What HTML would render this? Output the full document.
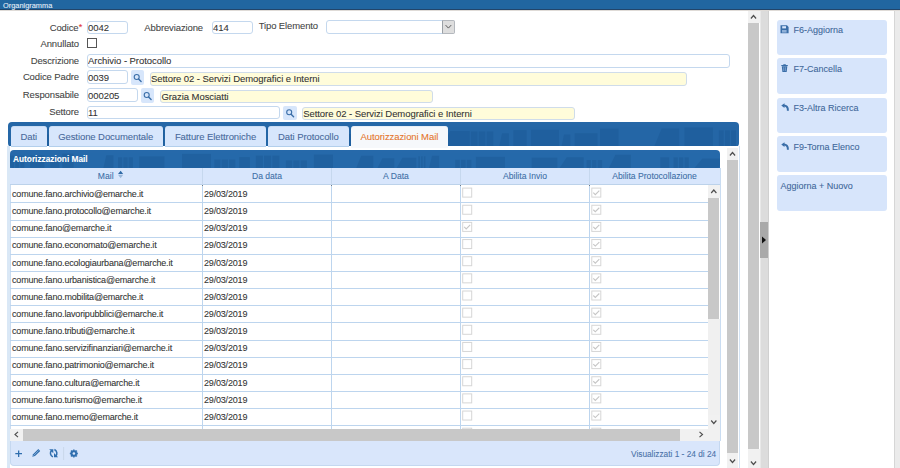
<!DOCTYPE html>
<html><head><meta charset="utf-8">
<style>
*{box-sizing:border-box;margin:0;padding:0}
html,body{width:900px;height:468px;overflow:hidden;background:#fff;font-family:"Liberation Sans",sans-serif;color:#333;-webkit-text-stroke:0.08px}
.a{position:absolute}
.lbl{font-size:9.5px;letter-spacing:-0.12px;color:#444;text-align:right;white-space:nowrap;line-height:14px}
.inp{border:1px solid #c4d8ee;border-radius:3px;background:#fff;font-size:9.5px;letter-spacing:-0.06px;line-height:12px;color:#333;padding-left:0;white-space:nowrap;overflow:hidden}
.yel{border:1px solid #cfdcea;border-radius:3px;background:#fffcda;font-size:9.5px;letter-spacing:-0.06px;line-height:12.5px;color:#333;padding-left:0;white-space:nowrap;overflow:hidden}
.sbtn{background:#d7e6fb;border-radius:2px}
.tab{top:126px;height:21px;background:#d7e6fc;border-top:1px solid #c9dcf3;border-bottom:1px solid #b3cfec;border-radius:3px 3px 0 0;color:#48699b;font-size:9.5px;letter-spacing:-0.08px;line-height:20.6px;text-align:center;white-space:nowrap}
.tab.act{background:#f6f8fb;color:#e5742a;height:22px;border-bottom:none;border-top-color:#e8eef6}
.gl{background:#bdd5ee}
.rt{font-size:9px;letter-spacing:-0.18px;color:#333;line-height:17px;white-space:nowrap}
.rbtn{left:776.5px;width:110.5px;height:35.5px;background:#d7e5fb;border-radius:3px;color:#3f679a;font-size:9px;line-height:12px;padding:4.4px 0 0 17px;white-space:nowrap}
.sb{background:#c8c8c8}
.arr{background:#f1f1f1}
.hd{font-size:8.6px;color:#3d6ea6;text-align:center;line-height:17px;white-space:nowrap}
</style></head><body>
<div class="a" style="left:0;top:0;width:900px;height:10px;background:#2166a0;border-bottom:1px solid #22456a"></div>
<div class="a" style="left:3px;top:0.8px;font-size:7.4px;line-height:10px;color:#e8f0f8;white-space:nowrap">Organigramma</div>
<div class="a" style="left:0;top:10px;width:900px;height:1px;background:#dfdbd7"></div>

<div class="a lbl" style="left:30px;top:21px;width:48.5px">Codice</div><div class="a" style="left:78.8px;top:22px;font-size:9px;line-height:10px;color:#e03030">*</div>
<div class="a inp" style="left:87px;top:21px;width:41px;height:13px">0042</div>
<div class="a lbl" style="left:140px;top:21px;width:63px">Abbreviazione</div>
<div class="a inp" style="left:212px;top:21px;width:41px;height:13px">414</div>
<div class="a lbl" style="left:250px;top:18.5px;width:68px">Tipo Elemento</div>
<div class="a inp" style="left:326px;top:19.5px;width:129px;height:14.5px"></div>
<div class="a" style="left:442px;top:20px;width:12.5px;height:13.5px;background:#dedede;border:1px solid #b4b8bd;border-left-color:#9aa0a6;border-radius:0 2px 2px 0"></div>
<div class="a lbl" style="left:20px;top:37px;width:59px">Annullato</div>
<div class="a" style="left:87px;top:38px;width:10px;height:10px;border:1px solid #555;background:#fff"></div>

<div class="a lbl" style="left:20px;top:54px;width:59px">Descrizione</div>
<div class="a inp" style="left:87px;top:54px;width:643px;height:14px">Archivio - Protocollo</div>

<div class="a lbl" style="left:10px;top:70px;width:69px">Codice Padre</div>
<div class="a inp" style="left:87px;top:70.4px;width:41.2px;height:13.6px;padding-top:0.6px">0039</div>
<div class="a sbtn" style="left:131px;top:70.3px;width:13px;height:14.7px"></div>
<div class="a yel" style="left:150px;top:72.3px;width:536.5px;height:13.3px">Settore 02 - Servizi Demografici e Interni</div>

<div class="a lbl" style="left:10px;top:88px;width:69px">Responsabile</div>
<div class="a inp" style="left:87px;top:88.2px;width:51.4px;height:13.4px;padding-top:0.8px">000205</div>
<div class="a sbtn" style="left:141px;top:88.2px;width:13.4px;height:14.7px"></div>
<div class="a yel" style="left:160.4px;top:90px;width:272.5px;height:13px">Grazia Mosciatti</div>

<div class="a lbl" style="left:10px;top:105px;width:69px">Settore</div>
<div class="a inp" style="left:87px;top:105.6px;width:193px;height:13px">11</div>
<div class="a sbtn" style="left:283.3px;top:105.7px;width:13.4px;height:14.3px"></div>
<div class="a yel" style="left:302.2px;top:107.3px;width:273.3px;height:13px">Settore 02 - Servizi Demografici e Interni</div>

<div class="a" style="left:8px;top:121.8px;width:730.5px;height:25.4px;background:#2567a7;border-radius:4px"></div>
<svg class="a" style="left:0;top:0" width="900" height="468" viewBox="0 0 900 468"><defs><clipPath id="c1"><rect x="8" y="122" width="730.5" height="25" rx="4"/></clipPath></defs><g clip-path="url(#c1)" fill="#1a5690" opacity="0.38"><rect x="41.3" y="134.5" width="3.9" height="12.5"/><rect x="46.4" y="134.5" width="3.9" height="12.5"/><rect x="51.5" y="134.5" width="3.9" height="12.5"/><rect x="62.6" y="133.4" width="28.8" height="13.6"/><rect x="93.6" y="130.6" width="29.4" height="16.4"/><rect x="128.6" y="129.9" width="19.1" height="17.1"/><rect x="149.3" y="129.9" width="6.9" height="17.1"/><rect x="157.4" y="129.9" width="6.9" height="17.1"/><rect x="165.6" y="129.9" width="6.9" height="17.1"/><rect x="176.1" y="134.2" width="1.6" height="12.8"/><rect x="178.8" y="134.2" width="1.6" height="12.8"/><rect x="181.6" y="134.2" width="1.6" height="12.8"/><polygon points="188.2,147 192.2,131.4 201.8,131.4 201.8,147"/><polygon points="207.5,147 210.6,133.6 217.9,133.6 217.9,147"/><rect x="220.0" y="132.0" width="25.1" height="15.0"/><rect x="268.3" y="135.5" width="5.9" height="11.5"/><rect x="275.4" y="135.5" width="5.9" height="11.5"/><rect x="282.5" y="135.5" width="5.9" height="11.5"/><polygon points="295.3,147 298.0,134.1 304.3,134.1 304.3,147"/><polygon points="307.2,147 314.0,132.0 330.0,132.0 330.0,147"/><rect x="332.2" y="134.0" width="30.0" height="13.0"/><polygon points="366.1,147 370.4,130.8 380.3,130.8 380.3,147"/><polygon points="383.2,147 390.8,132.6 408.4,132.6 408.4,147"/><rect x="411.4" y="134.4" width="24.7" height="12.6"/><polygon points="441.8,147 450.2,131.0 469.8,131.0 469.8,147"/><rect x="470.8" y="131.4" width="6.7" height="15.6"/><rect x="478.7" y="131.4" width="6.7" height="15.6"/><rect x="486.6" y="131.4" width="6.7" height="15.6"/><polygon points="499.1,147 502.0,133.2 508.9,133.2 508.9,147"/><rect x="513.3" y="130.1" width="13.4" height="16.9"/><rect x="530.9" y="129.8" width="28.1" height="17.2"/><polygon points="561.3,147 564.0,134.4 570.4,134.4 570.4,147"/><rect x="574.6" y="133.2" width="22.9" height="13.8"/><rect x="600.0" y="128.6" width="18.6" height="18.4"/><polygon points="654.0,147 661.6,128.6 679.2,128.6 679.2,147"/><rect x="684.4" y="127.5" width="28.5" height="19.5"/><rect x="718.8" y="130.3" width="4.9" height="16.7"/><rect x="725.0" y="130.3" width="4.9" height="16.7"/><rect x="731.1" y="130.3" width="4.9" height="16.7"/></g></svg>
<div class="a" style="left:7px;top:146px;width:733px;height:330px;border-left:3px solid #dae8f6;border-right:1.5px solid #d3e3f4;background:#fff"></div>
<div class="a" style="left:10px;top:168px;width:1px;height:273px;background:#c9dcf1"></div>
<div class="a tab" style="left:10.8px;width:36px">Dati</div>
<div class="a tab" style="left:48.6px;width:114.2px">Gestione Documentale</div>
<div class="a tab" style="left:164.9px;width:101.3px">Fatture Elettroniche</div>
<div class="a tab" style="left:267.8px;width:81.1px">Dati Protocollo</div>
<div class="a tab act" style="left:351px;width:96.8px">Autorizzazioni Mail</div>

<div class="a" style="left:10px;top:149.8px;width:710px;height:18.4px;background:#2669aa;border-radius:4px 4px 0 0"></div>
<svg class="a" style="left:0;top:0" width="900" height="468" viewBox="0 0 900 468"><defs><clipPath id="c2"><rect x="10" y="149.8" width="710" height="18.4" rx="4"/></clipPath></defs><g clip-path="url(#c2)" fill="#1a5690" opacity="0.38"><rect x="10.0" y="155.7" width="4.0" height="12.5"/><rect x="15.2" y="155.7" width="4.0" height="12.5"/><rect x="20.3" y="155.7" width="4.0" height="12.5"/><rect x="30.1" y="155.4" width="14.3" height="12.8"/><rect x="50.2" y="157.8" width="9.2" height="10.4"/><rect x="62.3" y="153.7" width="11.3" height="14.5"/><polygon points="103.3,168.20000000000002 106.3,155.3 113.5,155.3 113.5,168.20000000000002"/><rect x="118.0" y="157.3" width="4.2" height="10.9"/><rect x="123.4" y="157.3" width="4.2" height="10.9"/><rect x="128.7" y="157.3" width="4.2" height="10.9"/><rect x="139.2" y="156.4" width="25.3" height="11.8"/><rect x="182.0" y="153.9" width="29.0" height="14.3"/><rect x="214.3" y="159.5" width="6.2" height="8.7"/><rect x="221.7" y="159.5" width="6.2" height="8.7"/><rect x="229.1" y="159.5" width="6.2" height="8.7"/><rect x="239.2" y="157.1" width="10.7" height="11.1"/><rect x="255.8" y="155.6" width="7.1" height="12.6"/><rect x="264.0" y="155.6" width="7.1" height="12.6"/><rect x="272.3" y="155.6" width="7.1" height="12.6"/><rect x="285.9" y="160.4" width="6.2" height="7.8"/><rect x="293.3" y="160.4" width="6.2" height="7.8"/><rect x="300.7" y="160.4" width="6.2" height="7.8"/><rect x="313.9" y="154.5" width="19.1" height="13.7"/><polygon points="356.1,168.20000000000002 361.2,155.7 373.3,155.7 373.3,168.20000000000002"/><polygon points="377.3,168.20000000000002 382.4,158.3 394.3,158.3 394.3,168.20000000000002"/><polygon points="396.5,168.20000000000002 402.4,157.7 416.3,157.7 416.3,168.20000000000002"/><rect x="418.3" y="156.3" width="1.6" height="11.9"/><rect x="421.1" y="156.3" width="1.6" height="11.9"/><rect x="423.9" y="156.3" width="1.6" height="11.9"/><polygon points="429.0,168.20000000000002 432.0,155.8 439.1,155.8 439.1,168.20000000000002"/><rect x="455.2" y="159.8" width="4.6" height="8.4"/><rect x="461.0" y="159.8" width="4.6" height="8.4"/><rect x="466.8" y="159.8" width="4.6" height="8.4"/><rect x="475.9" y="156.8" width="29.1" height="11.4"/><rect x="531.7" y="157.7" width="25.6" height="10.5"/><polygon points="559.4,168.20000000000002 566.7,157.3 583.7,157.3 583.7,168.20000000000002"/><rect x="586.5" y="160.0" width="4.4" height="8.2"/><rect x="592.1" y="160.0" width="4.4" height="8.2"/><rect x="597.7" y="160.0" width="4.4" height="8.2"/><polygon points="608.8,168.20000000000002 615.4,154.8 630.8,154.8 630.8,168.20000000000002"/><rect x="660.3" y="157.3" width="8.9" height="10.9"/><rect x="673.5" y="157.4" width="4.3" height="10.8"/><rect x="679.0" y="157.4" width="4.3" height="10.8"/><rect x="684.5" y="157.4" width="4.3" height="10.8"/><polygon points="694.2,168.20000000000002 702.4,158.4 721.5,158.4 721.5,168.20000000000002"/></g></svg>
<div class="a" style="left:10px;top:150px;width:710px;height:18.4px;color:#fff;font-weight:bold;font-size:8.3px;line-height:18px;padding-left:3px">Autorizzazioni Mail</div>
<div class="a" style="left:10px;top:168.2px;width:710px;height:17px;background:#d8e6fc;border-bottom:1px solid #bcd2ea"></div>
<div class="a hd" style="left:97.8px;top:168px;text-align:left">Mail</div>
<div class="a hd" style="left:202px;top:168px;width:130px">Da data</div>
<div class="a hd" style="left:331px;top:168px;width:130px">A Data</div>
<div class="a hd" style="left:460px;top:168px;width:130px">Abilita Invio</div>
<div class="a hd" style="left:589px;top:168px;width:131px">Abilita Protocollazione</div>

<div class="a" style="left:0;top:0;width:708px;height:428.7px;overflow:hidden"><div class="a rt" style="left:12px;top:185.90px">comune.fano.archivio@emarche.it</div><div class="a rt" style="left:204px;top:185.90px">29/03/2019</div><div class="a gl" style="left:10px;top:202px;width:698px;height:1px"></div><div class="a rt" style="left:12px;top:203.05px">comune.fano.protocollo@emarche.it</div><div class="a rt" style="left:204px;top:203.05px">29/03/2019</div><div class="a gl" style="left:10px;top:220px;width:698px;height:1px"></div><div class="a rt" style="left:12px;top:220.20px">comune.fano@emarche.it</div><div class="a rt" style="left:204px;top:220.20px">29/03/2019</div><div class="a gl" style="left:10px;top:237px;width:698px;height:1px"></div><div class="a rt" style="left:12px;top:237.35px">comune.fano.economato@emarche.it</div><div class="a rt" style="left:204px;top:237.35px">29/03/2019</div><div class="a gl" style="left:10px;top:254px;width:698px;height:1px"></div><div class="a rt" style="left:12px;top:254.50px">comune.fano.ecologiaurbana@emarche.it</div><div class="a rt" style="left:204px;top:254.50px">29/03/2019</div><div class="a gl" style="left:10px;top:271px;width:698px;height:1px"></div><div class="a rt" style="left:12px;top:271.65px">comune.fano.urbanistica@emarche.it</div><div class="a rt" style="left:204px;top:271.65px">29/03/2019</div><div class="a gl" style="left:10px;top:288px;width:698px;height:1px"></div><div class="a rt" style="left:12px;top:288.80px">comune.fano.mobilita@emarche.it</div><div class="a rt" style="left:204px;top:288.80px">29/03/2019</div><div class="a gl" style="left:10px;top:305px;width:698px;height:1px"></div><div class="a rt" style="left:12px;top:305.95px">comune.fano.lavoripubblici@emarche.it</div><div class="a rt" style="left:204px;top:305.95px">29/03/2019</div><div class="a gl" style="left:10px;top:322px;width:698px;height:1px"></div><div class="a rt" style="left:12px;top:323.10px">comune.fano.tributi@emarche.it</div><div class="a rt" style="left:204px;top:323.10px">29/03/2019</div><div class="a gl" style="left:10px;top:340px;width:698px;height:1px"></div><div class="a rt" style="left:12px;top:340.25px">comune.fano.servizifinanziari@emarche.it</div><div class="a rt" style="left:204px;top:340.25px">29/03/2019</div><div class="a gl" style="left:10px;top:357px;width:698px;height:1px"></div><div class="a rt" style="left:12px;top:357.40px">comune.fano.patrimonio@emarche.it</div><div class="a rt" style="left:204px;top:357.40px">29/03/2019</div><div class="a gl" style="left:10px;top:374px;width:698px;height:1px"></div><div class="a rt" style="left:12px;top:374.55px">comune.fano.cultura@emarche.it</div><div class="a rt" style="left:204px;top:374.55px">29/03/2019</div><div class="a gl" style="left:10px;top:391px;width:698px;height:1px"></div><div class="a rt" style="left:12px;top:391.70px">comune.fano.turismo@emarche.it</div><div class="a rt" style="left:204px;top:391.70px">29/03/2019</div><div class="a gl" style="left:10px;top:408px;width:698px;height:1px"></div><div class="a rt" style="left:12px;top:408.85px">comune.fano.memo@emarche.it</div><div class="a rt" style="left:204px;top:408.85px">29/03/2019</div><div class="a gl" style="left:10px;top:425px;width:698px;height:1px"></div><div class="a rt" style="left:12px;top:426.00px">comune.fano.x@emarche.it</div><div class="a rt" style="left:204px;top:426.00px">29/03/2019</div><div class="a gl" style="left:10px;top:443px;width:698px;height:1px"></div><div class="a gl" style="left:202px;top:185px;width:1px;height:244px"></div><div class="a" style="left:202px;top:168px;width:1px;height:17px;background:#c6d8ee"></div><div class="a" style="left:202px;top:185px;width:1px;height:1px;background:#6d7a88"></div><div class="a gl" style="left:331px;top:185px;width:1px;height:244px"></div><div class="a" style="left:331px;top:168px;width:1px;height:17px;background:#c6d8ee"></div><div class="a" style="left:331px;top:185px;width:1px;height:1px;background:#6d7a88"></div><div class="a gl" style="left:460px;top:185px;width:1px;height:244px"></div><div class="a" style="left:460px;top:168px;width:1px;height:17px;background:#c6d8ee"></div><div class="a" style="left:460px;top:185px;width:1px;height:1px;background:#6d7a88"></div><div class="a gl" style="left:589px;top:185px;width:1px;height:244px"></div><div class="a" style="left:589px;top:168px;width:1px;height:17px;background:#c6d8ee"></div><div class="a" style="left:589px;top:185px;width:1px;height:1px;background:#6d7a88"></div><svg class="a" style="left:0;top:0" width="900" height="468" viewBox="0 0 900 468"><rect x="462.7" y="188.10" width="9" height="9" fill="#fff" stroke="#d6d6d6" stroke-width="1"/><rect x="591.8" y="188.10" width="9" height="9" fill="#fff" stroke="#d6d6d6" stroke-width="1"/><path d="M593.3,192.60000000000002 L595.3,194.60000000000002 L599.3,190.60000000000002" fill="none" stroke="#c6c6c6" stroke-width="1.1"/><rect x="462.7" y="205.25" width="9" height="9" fill="#fff" stroke="#d6d6d6" stroke-width="1"/><rect x="591.8" y="205.25" width="9" height="9" fill="#fff" stroke="#d6d6d6" stroke-width="1"/><path d="M593.3,209.75000000000003 L595.3,211.75000000000003 L599.3,207.75000000000003" fill="none" stroke="#c6c6c6" stroke-width="1.1"/><rect x="462.7" y="222.40" width="9" height="9" fill="#fff" stroke="#d6d6d6" stroke-width="1"/><path d="M464.2,226.90000000000003 L466.2,228.90000000000003 L470.2,224.90000000000003" fill="none" stroke="#c6c6c6" stroke-width="1.1"/><rect x="591.8" y="222.40" width="9" height="9" fill="#fff" stroke="#d6d6d6" stroke-width="1"/><path d="M593.3,226.90000000000003 L595.3,228.90000000000003 L599.3,224.90000000000003" fill="none" stroke="#c6c6c6" stroke-width="1.1"/><rect x="462.7" y="239.55" width="9" height="9" fill="#fff" stroke="#d6d6d6" stroke-width="1"/><rect x="591.8" y="239.55" width="9" height="9" fill="#fff" stroke="#d6d6d6" stroke-width="1"/><path d="M593.3,244.05 L595.3,246.05 L599.3,242.05" fill="none" stroke="#c6c6c6" stroke-width="1.1"/><rect x="462.7" y="256.70" width="9" height="9" fill="#fff" stroke="#d6d6d6" stroke-width="1"/><rect x="591.8" y="256.70" width="9" height="9" fill="#fff" stroke="#d6d6d6" stroke-width="1"/><path d="M593.3,261.2 L595.3,263.2 L599.3,259.2" fill="none" stroke="#c6c6c6" stroke-width="1.1"/><rect x="462.7" y="273.85" width="9" height="9" fill="#fff" stroke="#d6d6d6" stroke-width="1"/><rect x="591.8" y="273.85" width="9" height="9" fill="#fff" stroke="#d6d6d6" stroke-width="1"/><path d="M593.3,278.35 L595.3,280.35 L599.3,276.35" fill="none" stroke="#c6c6c6" stroke-width="1.1"/><rect x="462.7" y="291.00" width="9" height="9" fill="#fff" stroke="#d6d6d6" stroke-width="1"/><rect x="591.8" y="291.00" width="9" height="9" fill="#fff" stroke="#d6d6d6" stroke-width="1"/><path d="M593.3,295.5 L595.3,297.5 L599.3,293.5" fill="none" stroke="#c6c6c6" stroke-width="1.1"/><rect x="462.7" y="308.15" width="9" height="9" fill="#fff" stroke="#d6d6d6" stroke-width="1"/><rect x="591.8" y="308.15" width="9" height="9" fill="#fff" stroke="#d6d6d6" stroke-width="1"/><path d="M593.3,312.65000000000003 L595.3,314.65000000000003 L599.3,310.65000000000003" fill="none" stroke="#c6c6c6" stroke-width="1.1"/><rect x="462.7" y="325.30" width="9" height="9" fill="#fff" stroke="#d6d6d6" stroke-width="1"/><rect x="591.8" y="325.30" width="9" height="9" fill="#fff" stroke="#d6d6d6" stroke-width="1"/><path d="M593.3,329.8 L595.3,331.8 L599.3,327.8" fill="none" stroke="#c6c6c6" stroke-width="1.1"/><rect x="462.7" y="342.45" width="9" height="9" fill="#fff" stroke="#d6d6d6" stroke-width="1"/><rect x="591.8" y="342.45" width="9" height="9" fill="#fff" stroke="#d6d6d6" stroke-width="1"/><path d="M593.3,346.95 L595.3,348.95 L599.3,344.95" fill="none" stroke="#c6c6c6" stroke-width="1.1"/><rect x="462.7" y="359.60" width="9" height="9" fill="#fff" stroke="#d6d6d6" stroke-width="1"/><rect x="591.8" y="359.60" width="9" height="9" fill="#fff" stroke="#d6d6d6" stroke-width="1"/><path d="M593.3,364.1 L595.3,366.1 L599.3,362.1" fill="none" stroke="#c6c6c6" stroke-width="1.1"/><rect x="462.7" y="376.75" width="9" height="9" fill="#fff" stroke="#d6d6d6" stroke-width="1"/><rect x="591.8" y="376.75" width="9" height="9" fill="#fff" stroke="#d6d6d6" stroke-width="1"/><path d="M593.3,381.25 L595.3,383.25 L599.3,379.25" fill="none" stroke="#c6c6c6" stroke-width="1.1"/><rect x="462.7" y="393.90" width="9" height="9" fill="#fff" stroke="#d6d6d6" stroke-width="1"/><rect x="591.8" y="393.90" width="9" height="9" fill="#fff" stroke="#d6d6d6" stroke-width="1"/><path d="M593.3,398.40000000000003 L595.3,400.40000000000003 L599.3,396.40000000000003" fill="none" stroke="#c6c6c6" stroke-width="1.1"/><rect x="462.7" y="411.05" width="9" height="9" fill="#fff" stroke="#d6d6d6" stroke-width="1"/><rect x="591.8" y="411.05" width="9" height="9" fill="#fff" stroke="#d6d6d6" stroke-width="1"/><path d="M593.3,415.55 L595.3,417.55 L599.3,413.55" fill="none" stroke="#c6c6c6" stroke-width="1.1"/><rect x="462.7" y="428.20" width="9" height="9" fill="#fff" stroke="#d6d6d6" stroke-width="1"/><rect x="591.8" y="428.20" width="9" height="9" fill="#fff" stroke="#d6d6d6" stroke-width="1"/><path d="M593.3,432.7 L595.3,434.7 L599.3,430.7" fill="none" stroke="#c6c6c6" stroke-width="1.1"/></svg></div>

<div class="a" style="left:719.5px;top:168px;width:1px;height:273px;background:#c9dcf1"></div>
<div class="a arr" style="left:708px;top:185px;width:11.5px;height:13px"></div>
<div class="a sb" style="left:708px;top:198px;width:11px;height:120.7px"></div>
<div class="a" style="left:708px;top:318.7px;width:11.5px;height:96.3px;background:#f0f0f0"></div>
<div class="a arr" style="left:708px;top:415px;width:12px;height:14px"></div>
<div class="a arr" style="left:10px;top:428.7px;width:13px;height:12px"></div>
<div class="a sb" style="left:22.8px;top:428.7px;width:657.2px;height:12px"></div>
<div class="a arr" style="left:680px;top:428.7px;width:39.5px;height:12px"></div>
<div class="a" style="left:10px;top:440.5px;width:710px;height:25px;background:#d9e6fb;border-radius:0 0 4px 4px;border:1px solid #c5d8f0;border-top:none"></div>
<div class="a" style="left:631px;top:447.5px;font-size:8.3px;color:#4a72a8;line-height:12px;white-space:nowrap">Visualizzati 1 - 24 di 24</div>

<div class="a arr" style="left:727px;top:148.2px;width:11.2px;height:12px"></div>
<div class="a sb" style="left:727px;top:160.2px;width:11.2px;height:292.5px"></div>
<div class="a arr" style="left:727px;top:452.7px;width:11.2px;height:15.3px"></div>

<div class="a arr" style="left:748px;top:11.3px;width:11.5px;height:11.5px"></div>
<div class="a sb" style="left:748px;top:22.8px;width:11px;height:426px"></div>
<div class="a arr" style="left:748px;top:448.7px;width:11.5px;height:19.3px"></div>
<div class="a" style="left:759.5px;top:11px;width:9.1px;height:457px;background:#dcdcdc;border-left:1px solid #e8e8e8"></div>
<div class="a" style="left:760.2px;top:221.8px;width:8.4px;height:36.2px;background:#a9a9a9"></div>

<div class="a" style="left:768px;top:11px;width:1px;height:457px;background:#d0d0d0"></div>
<div class="a" style="left:894px;top:11px;width:6px;height:457px;background:#ebebeb;border-left:1px solid #d6d6d6"></div>
<div class="a rbtn" style="top:19.6px">F6-Aggiorna</div>
<div class="a rbtn" style="top:58.4px">F7-Cancella</div>
<div class="a rbtn" style="top:97.5px">F3-Altra Ricerca</div>
<div class="a rbtn" style="top:136.4px">F9-Torna Elenco</div>
<div class="a rbtn" style="top:175.3px;padding-left:4px">Aggiorna + Nuovo</div>
<svg class="a" style="left:0;top:0" width="900" height="468" viewBox="0 0 900 468"><path d="M750.9,18.5 L753.5,15.5 L756.1,18.5" fill="none" stroke="#4d4d4d" stroke-width="1.15"/><path d="M750.9,461.5 L753.5,464.5 L756.1,461.5" fill="none" stroke="#4d4d4d" stroke-width="1.15"/><path d="M729.9,155.5 L732.5,152.5 L735.1,155.5" fill="none" stroke="#4d4d4d" stroke-width="1.15"/><path d="M729.9,459.5 L732.5,462.5 L735.1,459.5" fill="none" stroke="#4d4d4d" stroke-width="1.15"/><path d="M711.1999999999999,193.0 L713.8,190.0 L716.4,193.0" fill="none" stroke="#4d4d4d" stroke-width="1.15"/><path d="M711.1999999999999,420.5 L713.8,423.5 L716.4,420.5" fill="none" stroke="#4d4d4d" stroke-width="1.15"/><path d="M18.0,431.9 L15.0,434.5 L18.0,437.1" fill="none" stroke="#4d4d4d" stroke-width="1.15"/><path d="M699.5,431.9 L702.5,434.5 L699.5,437.1" fill="none" stroke="#4d4d4d" stroke-width="1.15"/><path d="M445.59999999999997,25.1 L448.4,28.1 L451.2,25.1" fill="none" stroke="#5a5a5a" stroke-width="1.0"/><circle cx="136.7" cy="77" r="2.5" fill="none" stroke="#3a6ea8" stroke-width="1.1"/><path d="M138.6,78.9 L141.1,81.4" stroke="#3a6ea8" stroke-width="1.4" stroke-linecap="round"/><circle cx="146.7" cy="95" r="2.5" fill="none" stroke="#3a6ea8" stroke-width="1.1"/><path d="M148.6,96.9 L151.1,99.4" stroke="#3a6ea8" stroke-width="1.4" stroke-linecap="round"/><circle cx="289.2" cy="112.3" r="2.5" fill="none" stroke="#3a6ea8" stroke-width="1.1"/><path d="M291.09999999999997,114.2 L293.59999999999997,116.7" stroke="#3a6ea8" stroke-width="1.4" stroke-linecap="round"/><path d="M762,236.6 L766,240.1 L762,243.6 Z" fill="#111"/><path d="M118,174 L120.6,170.8 L123.2,174 Z" fill="#2f6aa6"/><path d="M118,174.8 L120.6,178.2 L123.2,174.8 Z" fill="#9ab8da"/><path d="M780.5,25.3 h6.5 l1.6,1.6 v6.4 h-8.1 Z" fill="#3a6ea8"/><rect x="782.2" y="26.2" width="3.8" height="2.2" fill="#d7e5fb"/><rect x="782" y="30" width="4.6" height="2.6" fill="#8fb0d8"/><path d="M781.3,64.9 h6.5 v1 h-6.5 Z M783.3,64.2 h2.5 v0.8 h-2.5Z M781.8,66.3 h5.5 l-0.6,5.7 h-4.3 Z" fill="#3a6ea8"/><path d="M783.7,67.2 v3.8 M785.4,67.2 v3.8" stroke="#9dbbe0" stroke-width="0.6"/><path d="M781.3,105.60000000000001 L784.5,103.3 L784.5,107.9 Z" fill="#3a6ea8"/><path d="M783.9,105.60000000000001 C786.3,105.60000000000001 788.0999999999999,107.0 787.9,110.8" fill="none" stroke="#3a6ea8" stroke-width="2"/><path d="M781.3,144.6 L784.5,142.29999999999998 L784.5,146.89999999999998 Z" fill="#3a6ea8"/><path d="M783.9,144.6 C786.3,144.6 788.0999999999999,146.0 787.9,149.79999999999998" fill="none" stroke="#3a6ea8" stroke-width="2"/><path d="M15.3,453.7 h6.7 M18.65,450.5 v6.4" stroke="#2f6eae" stroke-width="1.3"/><path d="M32.3,456.8 l0.8,-2.6 l5.2,-5.2 l1.9,1.9 l-5.2,5.2 Z" fill="#2f6eae"/><path d="M33.5,455.6 l5.2,-5.2" stroke="#d9e6fb" stroke-width="0.5"/><path d="M49.2,449.2 L53.3,449.2 L53.3,453.3 Z" fill="#2f6eae"/><path d="M51.6,450.6 C49.6,452.2 50.2,455.6 52.9,456.9" fill="none" stroke="#2f6eae" stroke-width="1.5"/><path d="M58.1,457.2 L54,457.2 L54,453.1 Z" fill="#2f6eae"/><path d="M55.7,455.8 C57.7,454.2 57.1,450.8 54.4,449.5" fill="none" stroke="#2f6eae" stroke-width="1.5"/><path d="M63.6,447 v13" stroke="#c5d3e6" stroke-width="0.8"/><polygon points="78.00,453.50 76.76,454.69 76.80,456.40 75.09,456.36 73.90,457.60 72.71,456.36 71.00,456.40 71.04,454.69 69.80,453.50 71.04,452.31 71.00,450.60 72.71,450.64 73.90,449.40 75.09,450.64 76.80,450.60 76.76,452.31" fill="#2f6eae" stroke="#2f6eae" stroke-width="0.5" stroke-linejoin="round"/><circle cx="73.9" cy="453.5" r="1.3" fill="#d9e6fb"/></svg>
</body></html>
